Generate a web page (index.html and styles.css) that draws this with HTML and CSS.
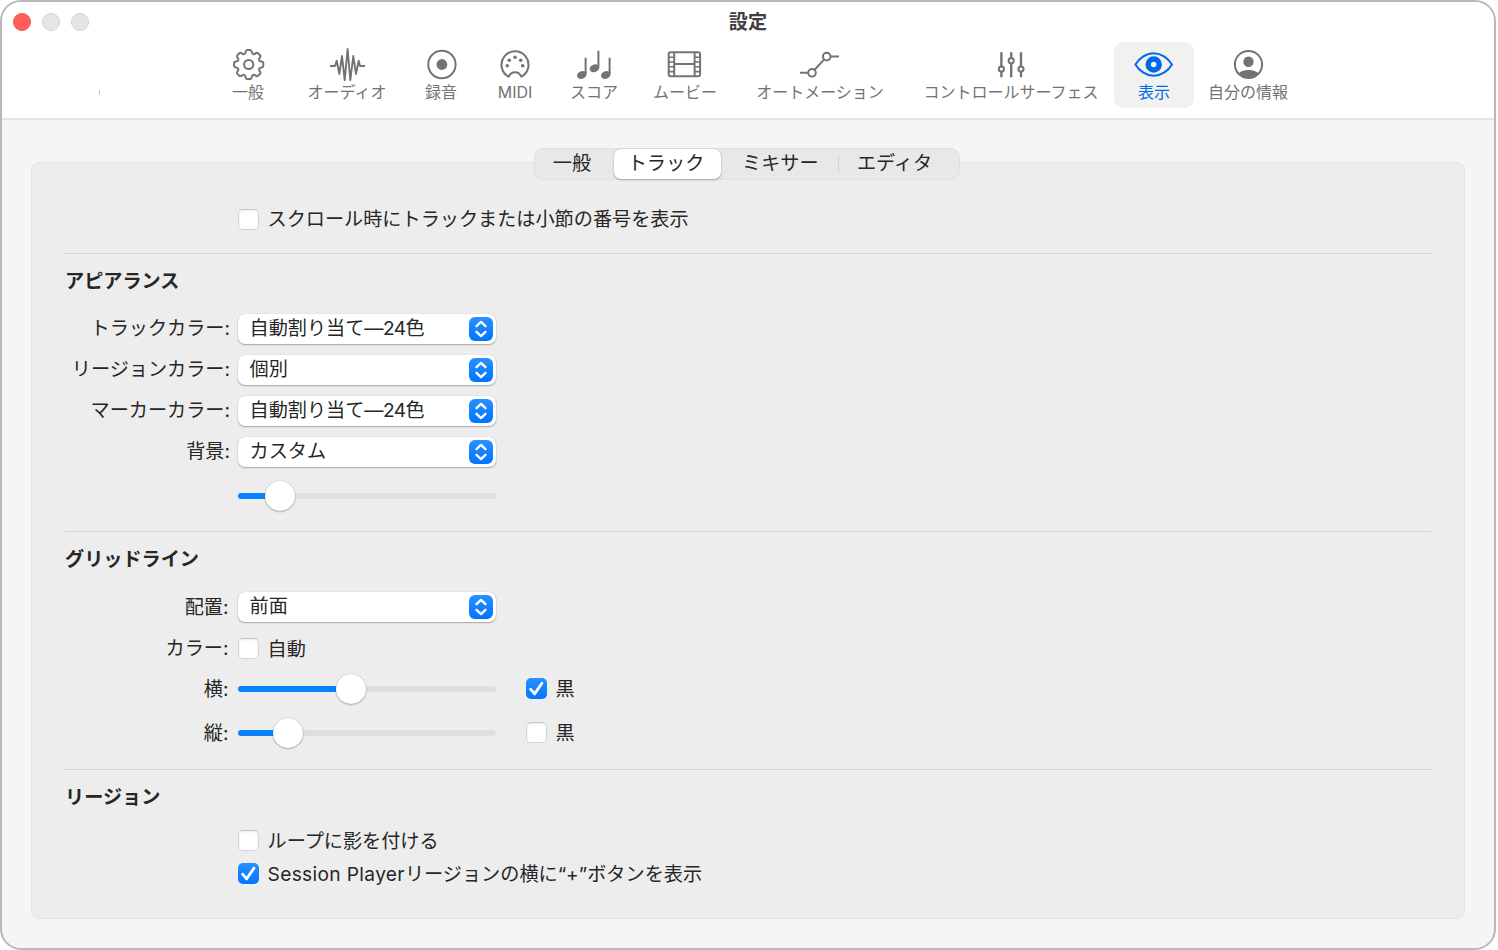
FILE: index.html
```html
<!DOCTYPE html>
<html lang="ja">
  <head>
    <meta charset="UTF-8" />
    <meta name="viewport" content="width=device-width, initial-scale=1.0" />
    <title>設定</title>
    <link rel="stylesheet" href="styles.css">
  </head>
  <body>
    <!-- Shared icon shapes -->
    <svg class="defs" width="0" height="0">
      <path id="tooth" d="M-4.3-10.3Q-3.3-10.9-3-12.8Q-2.7-14.6-1.4-14.6H1.4Q2.7-14.6 3-12.8Q3.3-10.9 4.3-10.3" />
      <symbol id="arrows" viewBox="0 0 24 24">
        <path d="M7.5 9.2L12 4.9L16.5 9.2M7.5 14.8L12 19.1L16.5 14.8" />
      </symbol>
      <symbol id="check" viewBox="0 0 21 21">
        <path d="M4.6 11.2L8.6 15.9L15.9 5.2" />
      </symbol>
    </svg>

    <div class="window">
      <header class="header">
        <div class="titlebar">
          <div class="lights">
            <span class="light close"></span>
            <span class="light"></span>
            <span class="light"></span>
          </div>
          <h1 class="title">設定</h1>
        </div>
        <span class="tick"></span>

        <nav class="toolbar">
          <div class="tool">
            <svg viewBox="-22.7 -17.5 44 36">
              <use href="#tooth" />
              <use href="#tooth" transform="rotate(45)" />
              <use href="#tooth" transform="rotate(90)" />
              <use href="#tooth" transform="rotate(135)" />
              <use href="#tooth" transform="rotate(180)" />
              <use href="#tooth" transform="rotate(225)" />
              <use href="#tooth" transform="rotate(270)" />
              <use href="#tooth" transform="rotate(315)" />
              <circle r="4.6" />
            </svg>
            <span>一般</span>
          </div>
          <div class="tool">
            <svg viewBox="-22 -18 44 36">
              <path class="wave" d="M-17 1H-12L-10.3-4.3L-7.7 9L-5-9L-2.3 15.2L.6-16L3.3 15.2L6.3-9L9 9L11.7-4.3L13 1H18" />
            </svg>
            <span>オーディオ</span>
          </div>
          <div class="tool">
            <svg viewBox="-22 -18 44 36">
              <circle cx=".9" cy="-.5" r="13.7" />
              <circle class="solid" cx=".9" cy="-.5" r="5.4" />
            </svg>
            <span>録音</span>
          </div>
          <div class="tool">
            <svg viewBox="-22 -18 44 36">
              <path d="M-6.3 11.7A13.5 13.5 0 1 1 6.3 11.7C4 5.6-4 5.6-6.3 11.7Z" />
              <g class="solid">
                <circle cy="-7.8" r="1.8" />
                <circle cx="-5.7" cy="-4.8" r="1.8" />
                <circle cx="5.7" cy="-4.8" r="1.8" />
                <circle cx="-7.7" cy=".7" r="1.8" />
                <circle cx="7.7" cy=".7" r="1.8" />
              </g>
            </svg>
            <span>MIDI</span>
          </div>
          <div class="tool">
            <svg viewBox="-22 -18 44 36">
              <path d="M-8.4-7.3V9M4.4-14.3V2.5M15.6-7.3V9" />
              <g class="solid">
                <ellipse cx="-12.2" cy="10" rx="4.9" ry="3.8" transform="rotate(-20 -12.2 10)" />
                <ellipse cx=".5" cy="3.2" rx="4.9" ry="3.8" transform="rotate(-20 .5 3.2)" />
                <ellipse cx="11.8" cy="10" rx="4.9" ry="3.8" transform="rotate(-20 11.8 10)" />
              </g>
            </svg>
            <span>スコア</span>
          </div>
          <div class="tool">
            <svg viewBox="-22 -18 44 36">
              <rect x="-16.3" y="-12.8" width="31.4" height="24" rx="2" />
              <path d="M-10.8-12.8V11.2M9.6-12.8V11.2M-10.8-.9H9.6" />
              <path class="thin" d="M-16.3-7.8H-10.8M-16.3-3H-10.8M-16.3 1.8H-10.8M-16.3 6.6H-10.8M9.6-7.8H15.1M9.6-3H15.1M9.6 1.8H15.1M9.6 6.6H15.1" />
            </svg>
            <span>ムービー</span>
          </div>
          <div class="tool">
            <svg viewBox="-22 -18 44 36">
              <path d="M-20 7.8H-12M-5.4 4.8L4-5.4M10.6-8.4H19" />
              <circle cx="-8" cy="7.8" r="3.8" />
              <circle cx="6.7" cy="-8.4" r="3.8" />
            </svg>
            <span>オートメーション</span>
          </div>
          <div class="tool">
            <svg viewBox="-22 -18 44 36">
              <path class="bar" d="M-9.6-12.7V1M-9.6 7V12.3M.2-12.7V-7.2M.2-1.4V12.3M10-12.7V1M10 7V12.3" />
              <circle cx="-9.6" cy="4" r="2.6" />
              <circle cx=".2" cy="-4.3" r="2.6" />
              <circle cx="10" cy="4" r="2.6" />
            </svg>
            <span>コントロールサーフェス</span>
          </div>
          <div class="tool selected">
            <svg viewBox="-22 -18 44 36">
              <path d="M-18.6-.5C-15-6.6-8-11.8-.3-11.8S14.4-6.6 18-.5C14.4 5.6 7.4 10.8-.3 10.8S-15 5.6-18.6-.5Z" />
              <circle class="iris" cx="-.3" cy="-.5" r="5.5" />
            </svg>
            <span>表示</span>
          </div>
          <div class="tool">
            <svg viewBox="-22.5 -18 44 36">
              <circle cy="-.5" r="13.6" />
              <circle class="solid" cy="-3.3" r="5.2" />
              <path class="solid" d="M-9.9 8.5C-6.8 3.8 6.8 3.8 9.9 8.5C4.7 15-4.7 15-9.9 8.5Z" />
            </svg>
            <span>自分の情報</span>
          </div>
        </nav>
      </header>

      <main class="panel">
        <div class="tabs">
          <span class="tab general">一般</span>
          <span class="tab active">トラック</span>
          <span class="tab mixer">ミキサー</span>
          <span class="tab editor">エディタ</span>
        </div>

        <div class="row first">
          <span class="label"></span>
          <span class="checkbox"></span>
          <span class="text">スクロール時にトラックまたは小節の番号を表示</span>
        </div>

        <!-- Appearance -->
        <section class="section appearance">
          <h2>アピアランス</h2>
          <div class="row">
            <span class="label">トラックカラー:</span>
            <div class="select"><span>自動割り当て<span class="number">—24</span>色</span><svg><use href="#arrows" /></svg></div>
          </div>
          <div class="row">
            <span class="label">リージョンカラー:</span>
            <div class="select"><span>個別</span><svg><use href="#arrows" /></svg></div>
          </div>
          <div class="row">
            <span class="label">マーカーカラー:</span>
            <div class="select"><span>自動割り当て<span class="number">—24</span>色</span><svg><use href="#arrows" /></svg></div>
          </div>
          <div class="row">
            <span class="label">背景:</span>
            <div class="select"><span>カスタム</span><svg><use href="#arrows" /></svg></div>
          </div>
          <div class="row tall">
            <span class="label"></span>
            <div class="slider" style="--value: 16.2%"><span class="knob"></span></div>
          </div>
        </section>

        <!-- Grid lines -->
        <section class="section grid-lines">
          <h2>グリッドライン</h2>
          <div class="row placement">
            <span class="label">配置:</span>
            <div class="select"><span>前面</span><svg><use href="#arrows" /></svg></div>
          </div>
          <div class="row">
            <span class="label">カラー:</span>
            <span class="checkbox"></span>
            <span class="text">自動</span>
          </div>
          <div class="row horizontal">
            <span class="label">横:</span>
            <div class="slider" style="--value: 43.8%"><span class="knob"></span></div>
            <span class="checkbox checked"><svg><use href="#check" /></svg></span>
            <span class="text">黒</span>
          </div>
          <div class="row tall">
            <span class="label">縦:</span>
            <div class="slider" style="--value: 19.6%"><span class="knob"></span></div>
            <span class="checkbox"></span>
            <span class="text">黒</span>
          </div>
        </section>

        <!-- Regions -->
        <section class="section regions">
          <h2>リージョン</h2>
          <div class="row">
            <span class="label"></span>
            <span class="checkbox"></span>
            <span class="text">ループに影を付ける</span>
          </div>
          <div class="row">
            <span class="label"></span>
            <span class="checkbox checked"><svg><use href="#check" /></svg></span>
            <span class="text"><span class="latin">Session Player</span>リージョンの横に“+”ボタンを表示</span>
          </div>
        </section>
      </main>
    </div>
  </body>
</html>
```
FILE: styles.css
```css
* {
  box-sizing: border-box;
}

body {
  margin: 0;
  background: #fff;
  color: #262626;
  font-family: Inter, "Noto Sans CJK JP", sans-serif;
  font-size: 19.15px;
  line-height: 28px;
}

h1,
h2 {
  margin: 0;
  font-size: 19.15px;
  font-weight: bold;
}

svg {
  display: block;
  fill: none;
  stroke: currentColor;
}

.defs {
  position: absolute;
}

.window {
  width: 1496px;
  height: 950px;
  overflow: hidden;
  border: 2px solid #b8b8b8;
  border-radius: 21px;
  background: #f5f5f5;
}

/* Title bar and toolbar */
.header {
  position: relative;
  height: 118px;
  border-bottom: 2px solid #e3e3e3;
  background: #fff;
}

.titlebar {
  display: grid;
  grid-template-columns: 1fr auto 1fr;
  align-items: center;
  height: 40px;
}

.lights {
  display: flex;
  gap: 11px;
  padding-left: 11px;
}

.light {
  width: 18px;
  height: 18px;
  border: 1px solid #d2d2d2;
  border-radius: 50%;
  background: #e5e5e5;
}

.light.close {
  border-color: #f0554d;
  background: #ff5f57;
}

.title {
  padding-bottom: 1px;
  color: #404040;
}

.tick {
  position: absolute;
  top: 88px;
  left: 97px;
  width: 1px;
  height: 5px;
  background: #c4c4c4;
}

.toolbar {
  display: grid;
  grid-template-columns: 88px 110px 78px 70px 88px 94px 176px 206px 80px 108px;
  margin-left: 202px;
}

.tool {
  display: flex;
  flex-direction: column;
  align-items: center;
  height: 66px;
  padding-top: 5px;
  border-radius: 9px;
  color: #737373;
  font-size: 16px;
  line-height: 18px;
  white-space: nowrap;
}

.tool svg {
  width: 44px;
  height: 36px;
  stroke-width: 2;
  stroke-linejoin: round;
}

.tool .thin {
  stroke-width: 1.6;
}

.tool .wave {
  stroke-width: 1.9;
}

.tool .bar {
  stroke-width: 2.4;
}

.tool .solid {
  fill: currentColor;
  stroke: none;
}

.tool .iris {
  stroke-width: 5.4;
}

.tool.selected {
  background: #f1f1f1;
  color: #0068eb;
}

/* Content panel */
.panel {
  width: 1434px;
  height: 757px;
  margin: 42px 0 0 29px;
  padding: 0 33px;
  border: 1px solid #e5e5e5;
  border-radius: 8px;
  background: #ededed;
}

.tabs {
  display: flex;
  width: 426px;
  height: 32px;
  margin: -15px 0 22px 469px;
  padding: 0 1px;
  border: 1px solid #e0e0e0;
  border-radius: 9px;
  background: #e8e8e8;
}

.tab {
  height: 30px;
  text-align: center;
  line-height: 28px;
}

.general {
  width: 78px;
  padding-right: 6px;
}

.active {
  width: 107px;
  padding-right: 3px;
  border-radius: 7px;
  background: #fff;
  box-shadow: 0 0 1px rgba(0, 0, 0, 0.3), 0 1px 2px rgba(0, 0, 0, 0.25);
}

.mixer {
  display: flex;
  justify-content: space-between;
  width: 118px;
  padding-left: 21px;
}

.mixer::after {
  content: "";
  width: 1px;
  height: 18px;
  margin-top: 6px;
  background: #d2d2d2;
}

.editor {
  width: 111px;
}

.section {
  width: 1366px;
  border-top: 1px solid #d3d3d3;
}

.appearance {
  height: 278px;
}

.grid-lines {
  height: 238px;
}

.section h2 {
  height: 54px;
  line-height: 55px;
}

.row {
  display: flex;
  align-items: center;
  height: 41px;
}

.row.first {
  height: 34px;
  margin-bottom: 17px;
}

.row.placement {
  height: 42px;
}

.row.horizontal {
  height: 40px;
}

.row.tall {
  height: 48px;
}

.regions .row {
  height: 33px;
}

.label {
  width: 165px;
  margin-right: 8px;
  padding-bottom: 1px;
  text-align: right;
  white-space: nowrap;
}

.grid-lines .label {
  padding-right: 1.5px;
}

.text {
  margin-left: 8.5px;
  white-space: nowrap;
}

.latin {
  letter-spacing: 0.35px;
}

.number {
  letter-spacing: -0.6px;
}

/* Controls */
.select {
  display: flex;
  align-items: center;
  justify-content: space-between;
  width: 257.5px;
  height: 30px;
  padding: 0 3px 0 11.5px;
  border-radius: 7px;
  background: #fff;
  box-shadow: 0 0 1px rgba(0, 0, 0, 0.25), 0 1px 1.5px rgba(0, 0, 0, 0.28);
}

.select > span {
  padding-bottom: 2px;
}

.select svg {
  width: 24px;
  height: 24px;
  border-radius: 6px;
  background: linear-gradient(#2990ff, #0075ff);
  color: #fff;
  stroke-width: 2.3;
  stroke-linecap: round;
  stroke-linejoin: round;
}

.checkbox {
  width: 21px;
  height: 21px;
  border: 1px solid #d4d4d4;
  border-top-color: #c6c6c6;
  border-radius: 5px;
  background: #fff;
  box-shadow: inset 0 1px 2px rgba(0, 0, 0, 0.08);
}

.checkbox.checked {
  border: 0;
  background: linear-gradient(#2990ff, #0075ff);
  box-shadow: none;
}

.checkbox svg {
  width: 21px;
  height: 21px;
  color: #fff;
  stroke-width: 2.8;
  stroke-linecap: round;
  stroke-linejoin: round;
}

.slider {
  position: relative;
  width: 257.5px;
  height: 6px;
  border-radius: 3px;
  background: linear-gradient(to right, #0a82ff var(--value), #dfdfdf var(--value));
}

.slider + .checkbox {
  margin: 0 0 2px 30.5px;
}

.knob {
  position: absolute;
  top: -12px;
  left: calc(var(--value) - 15px);
  width: 30px;
  height: 30px;
  border-radius: 50%;
  background: #fff;
  box-shadow: 0 0 1px rgba(0, 0, 0, 0.3), 0 1px 2px rgba(0, 0, 0, 0.25);
}
```
